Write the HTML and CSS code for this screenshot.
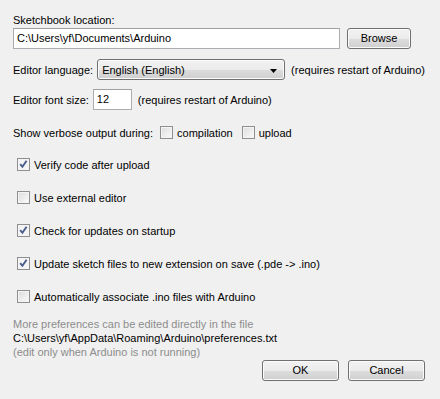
FILE: index.html
```html
<!DOCTYPE html>
<html>
<head lang="en">
    <meta charset="UTF-8">
    <title>Preferences</title>
    <link rel="stylesheet" href="styles.css">
</head>
<body>
<div class="pane">
    <div class="label-row">Sketchbook location:</div>
    <div class="row row-path">
        <div class="field path">C:\Users\yf\Documents\Arduino</div>
        <div class="btn browse">Browse</div>
    </div>
    <div class="row row-lang">
        <span>Editor language:</span>
        <div class="combo">
            <span>English (English)</span>
            <svg class="arrow" width="7" height="4" viewBox="0 0 7 4"><path d="M0 0h7L3.5 4z" fill="#000"/></svg>
        </div>
        <span>(requires restart of Arduino)</span>
    </div>
    <div class="row row-font">
        <span>Editor font size:</span>
        <div class="field size">12</div>
        <span>(requires restart of Arduino)</span>
    </div>
    <div class="row row-verbose">
        <span>Show verbose output during:</span>
        <span class="check lead"></span><span class="opt">compilation</span>
        <span class="check"></span><span>upload</span>
    </div>
    <div class="row opt-row first"><span class="check on"></span>Verify code after upload</div>
    <div class="row opt-row"><span class="check"></span>Use external editor</div>
    <div class="row opt-row"><span class="check on"></span>Check for updates on startup</div>
    <div class="row opt-row"><span class="check on"></span>Update sketch files to new extension on save (.pde -&gt; .ino)</div>
    <div class="row opt-row"><span class="check"></span>Automatically associate .ino files with Arduino</div>
    <div class="notes">
        <div class="muted">More preferences can be edited directly in the file</div>
        <div>C:\Users\yf\AppData\Roaming\Arduino\preferences.txt</div>
        <div class="muted">(edit only when Arduino is not running)</div>
    </div>
    <div class="actions">
        <div class="btn">OK</div>
        <div class="btn">Cancel</div>
    </div>
</div>
</body>
</html>
```

FILE: styles.css
```css
*{
    margin: 0;
    padding: 0;
    box-sizing: border-box;
}
html, body{
    width: 440px;
    height: 399px;
    background: #f0f0f0;
    overflow: hidden;
}
body{
    font-family: "Liberation Sans", Arial, sans-serif;
    font-size: 11px;
    color: #000;
}
.pane{
    display: flex;
    flex-direction: column;
    padding: 13px 15px 0 13px;
}
.label-row{
    height: 14px;
    line-height: 14px;
}
.row{
    display: flex;
    align-items: center;
    height: 21px;
    white-space: nowrap;
}
.row-path{
    margin-top: 1px;
    gap: 7px;
}
.field{
    height: 21px;
    line-height: 19px;
    background: #fff;
    border: 1px solid #abadb3;
    border-top-color: #a0a0a0;
    padding: 0 3px;
}
.path{
    width: 327px;
}
.btn{
    width: 65px;
    height: 21px;
    line-height: 19px;
    text-align: center;
    border: 1px solid #707070;
    border-radius: 3px;
    background: linear-gradient(#f2f2f2 0%, #ebebeb 50%, #dddddd 51%, #cfcfcf 100%);
    box-shadow: inset 0 0 0 1px #fbfbfb;
}
.browse{
    width: 64px;
}
.row-lang{
    margin-top: 10px;
}
.combo{
    width: 190px;
    height: 21px;
    margin: 0 6px 0 4px;
    display: flex;
    align-items: center;
    justify-content: space-between;
    padding: 0 7px 0 4px;
    border: 1px solid #707070;
    border-radius: 3px;
    background: linear-gradient(#f2f2f2 0%, #ebebeb 50%, #dddddd 51%, #cfcfcf 100%);
    box-shadow: inset 0 0 0 1px #fbfbfb;
}
.arrow{
    margin-top: 2px;
}
.row-font{
    margin-top: 9px;
}
.size{
    width: 39px;
    margin: 0 6px 0 4px;
}
.row-verbose{
    margin-top: 12px;
}
.check{
    width: 13px;
    height: 13px;
    flex: none;
    border: 1px solid #8f8f8f;
    background: linear-gradient(135deg, #dcdcdc, #fbfbfb);
    box-shadow: inset 0 0 0 1px #f4f4f4;
    margin-right: 4px;
}
.check.lead{
    margin-left: 7px;
}
.opt{
    margin-right: 9px;
}
.check.on{
    background: #f4f4f4 url("data:image/svg+xml;utf8,<svg xmlns='http://www.w3.org/2000/svg' width='11' height='11' viewBox='0 0 11 11'><path d='M2.2 5.2 L4.4 7.8 L8.6 1.8' fill='none' stroke='%23495c8c' stroke-width='1.9'/></svg>") center/11px 11px no-repeat;
}
.opt-row{
    padding-left: 4px;
    margin-top: 12px;
}
.opt-row.first{
    margin-top: 11px;
}
.notes{
    margin-top: 10px;
    line-height: 14px;
}
.muted{
    color: #8d8d8d;
}
.actions{
    display: flex;
    justify-content: flex-end;
    gap: 9px;
    margin-top: 1px;
}
.actions .btn{
    width: 77px;
}
```
